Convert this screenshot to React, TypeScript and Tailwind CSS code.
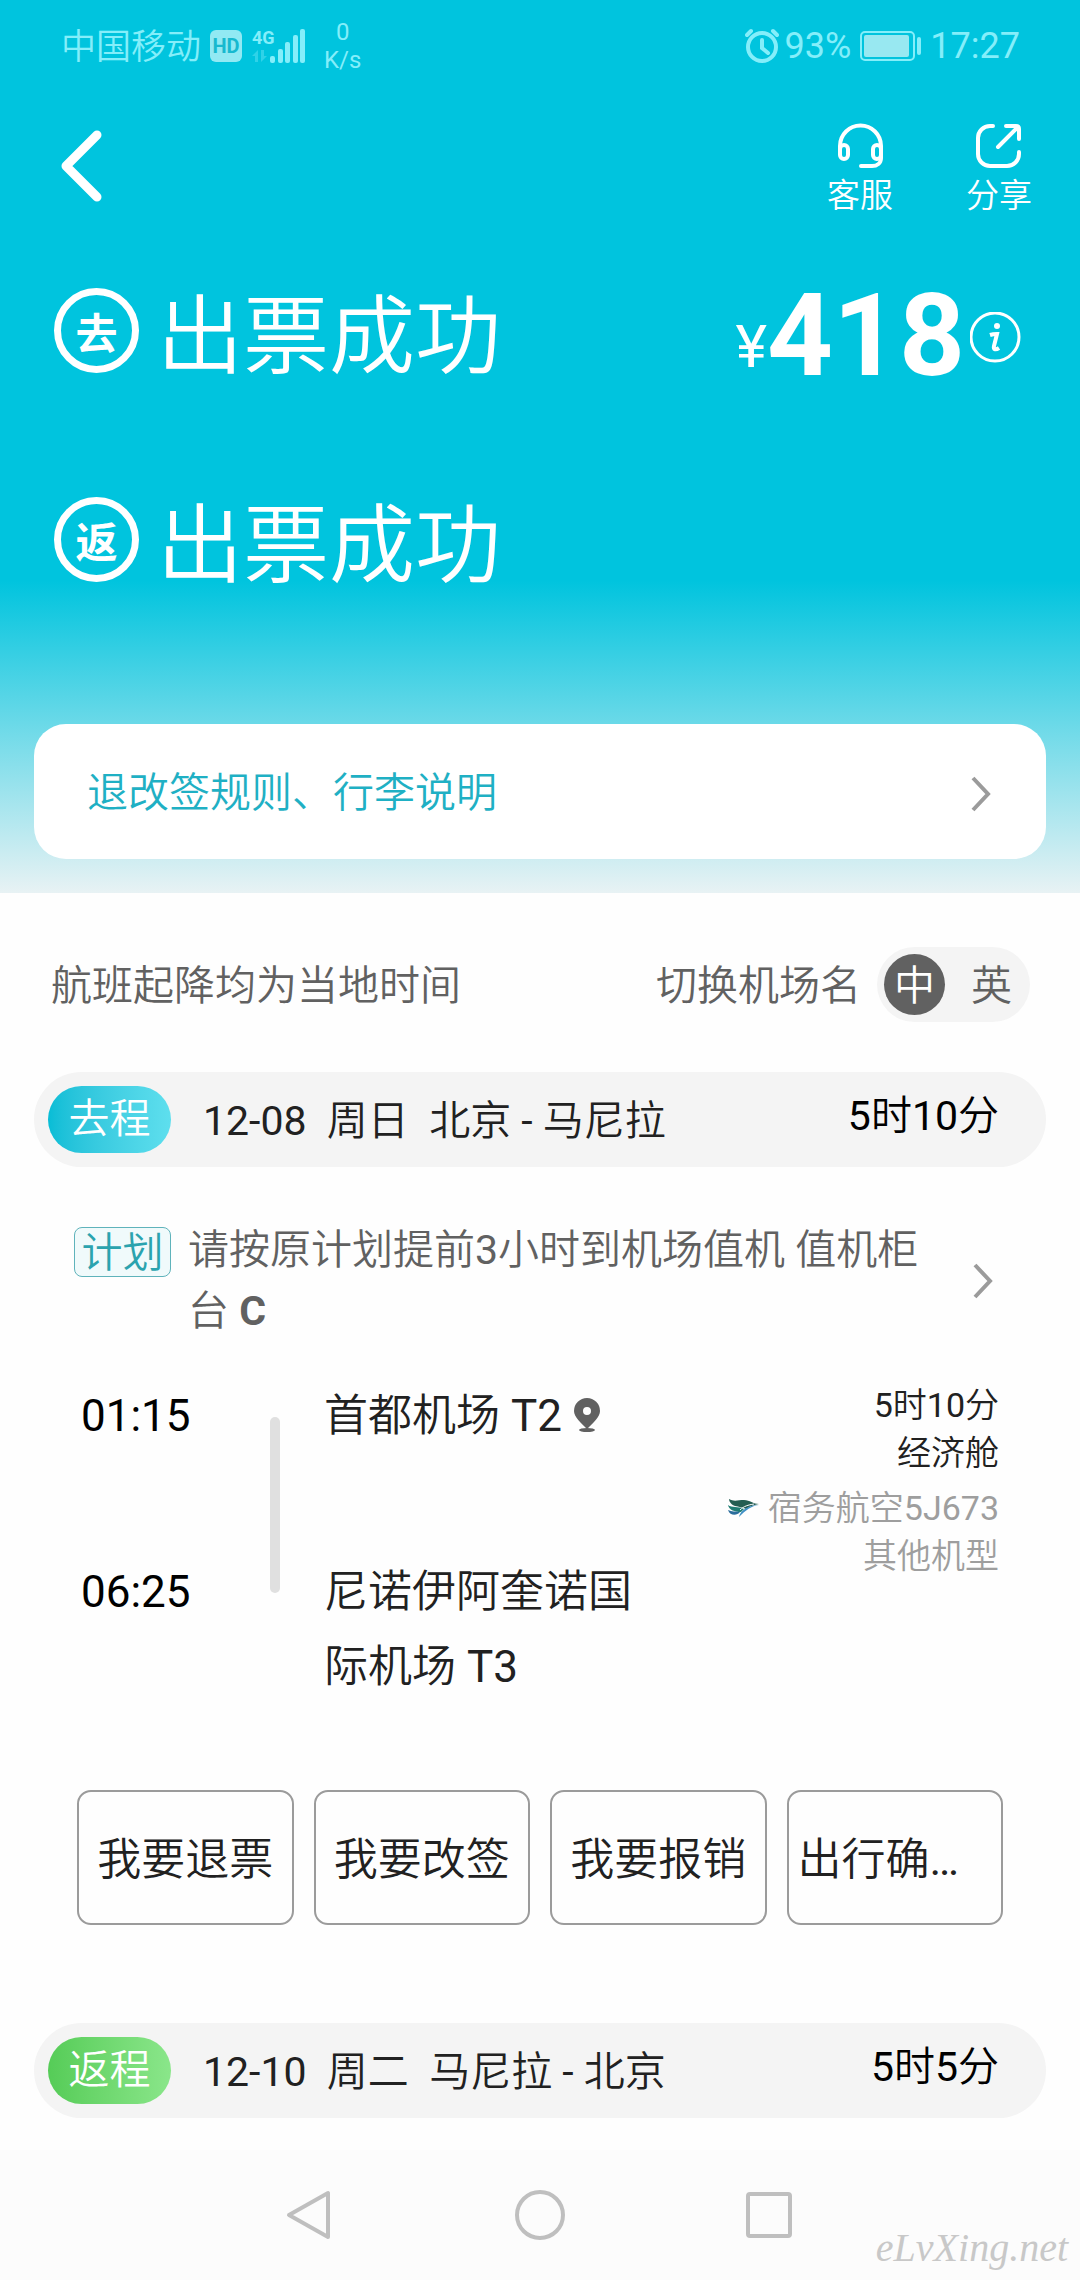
import { useState } from 'react'
import clsx from 'clsx'

interface SegmentBarProps {
  label: string
  date: string
  weekday: string
  from: string
  to: string
  duration: string
  tone: 'outbound' | 'return'
}

const actions = ['我要退票', '我要改签', '我要报销', '出行确…']

function ChevronRight() {
  return (
    <svg className="h-9 w-5 shrink-0" viewBox="0 0 20 36" fill="none" stroke="#9b9b9b" strokeWidth="4">
      <path d="M2 2 17 18 2 34" />
    </svg>
  )
}

function StatusBar() {
  return (
    <div className="flex h-[92px] items-center justify-between pr-[60px] pl-[61px] text-[35px] text-[#84eefa]">
      <div className="flex items-center">
        <span className="pt-1">中国移动</span>
        <span className="ml-[9px] flex h-8 w-8 items-center justify-center rounded-md bg-[#92e9f3] text-[20px] font-bold text-[#18b9cf]">
          HD
        </span>
        <svg className="ml-[10px] h-9 w-[54px]" viewBox="0 0 54 36" fill="currentColor">
          <text x="0" y="16" fontSize="18" fontWeight="700" fontFamily="Roboto, sans-serif">
            4G
          </text>
          <path d="M0 28 6 22v12H3v-6zM9 22v12l6-6h-3v-6z" fill="#2fd2e8" />
          <rect x="18" y="28" width="5" height="7" rx="2" />
          <rect x="26" y="21" width="5" height="14" rx="2" />
          <rect x="33" y="14" width="5" height="21" rx="2" />
          <rect x="41" y="7" width="5" height="28" rx="2" />
          <rect x="48" y="1" width="5" height="34" rx="2" />
        </svg>
        <div className="ml-[18px] flex flex-col items-center text-[24px] leading-7">
          <span>0</span>
          <span>K/s</span>
        </div>
      </div>
      <div className="flex items-center">
        <svg className="h-9 w-[34px]" viewBox="0 0 34 36" fill="none" stroke="currentColor" strokeLinecap="round">
          <circle cx="17" cy="19" r="14" strokeWidth="4" />
          <path d="M17 12v8l6 5" strokeWidth="4" />
          <path d="M2 7 6 3M32 7 28 3" strokeWidth="4" />
        </svg>
        <span className="ml-[6px] text-[36px]">93%</span>
        <svg className="mr-2 ml-[9px] h-[30px] w-[62px]" viewBox="0 0 62 30">
          <rect x="1" y="1" width="53" height="28" rx="4" fill="none" stroke="currentColor" strokeWidth="2" />
          <rect x="4" y="4" width="45" height="22" rx="2" fill="#98e8f1" />
          <rect x="57" y="6" width="4" height="18" rx="2" fill="currentColor" />
        </svg>
        <span className="text-[36px]">17:27</span>
      </div>
    </div>
  )
}

function IssuedStatus({ mark }: { mark: string }) {
  return (
    <div className="flex gap-[18px]">
      <span className="flex h-[85px] w-[85px] items-center justify-center rounded-full border-[7px] border-white font-['Noto_Sans_CJK_SC',sans-serif] text-[42px] leading-none font-bold">
        {mark}
      </span>
      <span className="pt-1 text-[86px] leading-[92px]">出票成功</span>
    </div>
  )
}

function SegmentBar({ label, date, weekday, from, to, duration, tone }: SegmentBarProps) {
  return (
    <div className="mx-[34px] flex h-[95px] items-center rounded-full bg-[#f4f4f4] pr-[47px] pl-[14px] text-[41px]">
      <span
        className={clsx(
          'flex h-[67px] w-[123px] items-center justify-center rounded-full bg-linear-to-r text-white',
          tone === 'outbound' ? 'from-[#06bdd6] to-[#5edfee]' : 'from-[#55cc57] to-[#8ae68a]'
        )}
      >
        {label}
      </span>
      <span className="ml-8 flex-1 whitespace-pre pt-1 text-[#212121]">
        {`${date}  ${weekday}  ${from} - ${to}`}
      </span>
      <span className="pb-[6px] text-black">{duration}</span>
    </div>
  )
}

function CebuLogo() {
  return (
    <svg className="h-5 w-8" viewBox="0 0 32 20">
      <path d="M1 1c5 3 9 1 15 1 6 0 9 4 15 4-5 1-9 2-13 5-4-2-7-2-11-3C4 7 1 4 1 1z" fill="#245e52" />
      <path d="M0 7c4 3 10 1 16 4l-3 3C7 14 1 12 0 7z" fill="#1f7d73" />
      <path d="M0 12c4 2 7 1 12 2-3 4-10 4-12-2z" fill="#2b6d9c" />
      <path d="M12 12c4-4 8-5 14-6" fill="none" stroke="#fefefe" strokeWidth="1" />
      <path d="M31 7c-8 1-13 5-20 12 1-6 9-12 20-12z" fill="#3f8fc4" />
    </svg>
  )
}

export default function App() {
  const [lang, setLang] = useState('中')

  return (
    <div className="relative min-h-screen overflow-hidden bg-[#fefefe] font-['Roboto','Noto_Sans_CJK_SC_DemiLight','Noto_Sans_CJK_SC',sans-serif]">
      <header className="bg-linear-to-b/srgb from-[#00c4de] from-65% to-[#e8f2f4] pb-[34px] text-white">
        <StatusBar />

        <div className="flex items-start justify-between pt-[30px] pr-12 pl-[60px]">
          <button aria-label="返回" className="mt-2">
            <svg className="h-[72px] w-[42px]" viewBox="0 0 42 72" fill="none" stroke="currentColor" strokeWidth="9" strokeLinecap="round" strokeLinejoin="round">
              <path d="M37 5 6 36 37 67" />
            </svg>
          </button>
          <div className="flex gap-[73px] text-[33px] leading-10">
            <button className="flex flex-col items-center gap-2">
              <svg className="h-[46px] w-[46px]" viewBox="0 0 46 46" fill="none" stroke="currentColor" strokeWidth="4" strokeLinecap="round">
                <path d="M3 28v-4a20 20 0 0 1 41 0v12c0 5-4 8-9 8H24" />
                <rect x="3" y="23" width="8" height="14" rx="4" />
                <rect x="36" y="23" width="8" height="14" rx="4" />
              </svg>
              客服
            </button>
            <button className="flex flex-col items-center gap-2">
              <svg className="h-[46px] w-[46px]" viewBox="0 0 46 46" fill="none" stroke="currentColor" strokeWidth="4" strokeLinecap="round" strokeLinejoin="round">
                <path d="M17 4h-3A12 12 0 0 0 2 16v16a12 12 0 0 0 12 12h17a12 12 0 0 0 12-12v-2" />
                <path d="M30 4h10q3 0 3 3v10M42 5 22 25" />
              </svg>
              分享
            </button>
          </div>
        </div>

        <div className="mt-[72px] flex justify-between pr-[59px] pl-[54px]">
          <IssuedStatus mark="去" />
          <div className="flex h-[94px] items-center">
            <span className="mt-6 text-[60px] leading-none">¥</span>
            <span className="text-[115px] leading-none font-bold">418</span>
            <button aria-label="价格明细" className="mt-1 ml-[5px]">
              <svg className="h-[51px] w-[51px]" viewBox="0 0 51 51" fill="none" stroke="currentColor">
                <circle cx="25" cy="25" r="24" strokeWidth="3" />
                <circle cx="27" cy="14" r="3" fill="currentColor" stroke="none" />
                <path d="M20 23c3-1 5-1 7-1l-3 12c-1 4 2 4 5 2" strokeWidth="4" />
              </svg>
            </button>
          </div>
        </div>
        <div className="mt-[113px] pl-[54px]">
          <IssuedStatus mark="返" />
        </div>

        <a
          href="#rules"
          className="mx-[34px] mt-[131px] flex h-[135px] items-center justify-between rounded-[32px] bg-white pt-1 pr-[55px] pl-[53px] text-[41px] text-[#1fb0c4]"
        >
          退改签规则、行李说明
          <ChevronRight />
        </a>
      </header>

      <main className="pb-8">
        <div className="mt-[54px] mb-[50px] flex items-center justify-between pr-[50px] pl-[51px] text-[41px] text-[#616161]">
          <p className="pt-1">航班起降均为当地时间</p>
          <div className="flex items-center gap-4">
            <span className="pt-1">切换机场名</span>
            <div className="flex h-[75px] items-center gap-4 rounded-full bg-[#f4f4f4] pr-2 pl-[7px]">
              {['中', '英'].map((item) => (
                <button
                  key={item}
                  aria-pressed={lang === item}
                  onClick={() => setLang(item)}
                  className={clsx(
                    'flex h-[61px] w-[61px] items-center justify-center rounded-full pt-1',
                    lang === item && 'bg-[#616161] text-white'
                  )}
                >
                  {item}
                </button>
              ))}
            </div>
          </div>
        </div>

        <SegmentBar label="去程" date="12-08" weekday="周日" from="北京" to="马尼拉" duration="5时10分" tone="outbound" />

        <a href="#checkin" className="mt-[53px] flex items-center pr-[87px] pl-[74px] text-[41px] text-[#616161]">
          <span className="mt-[7px] flex h-[50px] w-[97px] shrink-0 items-center justify-center self-start rounded-lg border border-[#5fb3bb] bg-[#f0fafb] pt-1 text-[41px] text-[#2ba3ae]">
            计划
          </span>
          <span className="mr-[30px] ml-[17px] flex-1 leading-[61px]">
            请按原计划提前3小时到机场值机 值机柜台 <b>C</b>
          </span>
          <ChevronRight />
        </a>

        <section className="mt-[37px] flex pr-[81px] pl-[81px] text-[44px] leading-[75px] text-[#212121]">
          <div className="flex w-[189px] flex-col gap-[101px] text-black">
            <time>01:15</time>
            <time>06:25</time>
          </div>
          <div className="mt-[38px] h-44 w-[10px] rounded-full bg-[#e0e0e0]" />
          <div className="ml-11 flex w-[314px] flex-col gap-[101px]">
            <p className="flex items-center gap-3">
              首都机场 T2
              <svg className="mb-1 h-[34px] w-[26px]" viewBox="0 0 26 34" fill="#616161">
                <path fillRule="evenodd" d="M13 0a13 13 0 0 1 13 13c0 6-7 12-13 18C7 25 0 19 0 13A13 13 0 0 1 13 0zm0 9a4 4 0 1 0 0 8 4 4 0 0 0 0-8z" />
                <ellipse cx="13" cy="32" rx="8" ry="2" />
              </svg>
            </p>
            <p>尼诺伊阿奎诺国际机场 T3</p>
          </div>
          <div className="flex flex-1 flex-col items-end pt-[2px] text-[34px] leading-[48px]">
            <span>5时10分</span>
            <span>经济舱</span>
            <span className="mt-[7px] flex items-center gap-2 text-[#9e9e9e]">
              <CebuLogo />
              宿务航空5J673
            </span>
            <span className="text-[#9e9e9e]">其他机型</span>
          </div>
        </section>

        <div className="mt-[85px] mb-[98px] grid grid-cols-4 gap-5 px-[77px]">
          {actions.map((action) => (
            <button
              key={action}
              className="h-[135px] rounded-[14px] border-2 border-[#9b9b9b] px-[9px] pt-1 text-[44px] whitespace-nowrap text-[#212121] last:text-left"
            >
              {action}
            </button>
          ))}
        </div>

        <SegmentBar label="返程" date="12-10" weekday="周二" from="马尼拉" to="北京" duration="5时5分" tone="return" />
      </main>

      <nav className="flex h-[130px] items-center justify-center gap-[180px] bg-[#fcfcfc]">
        <button aria-label="后退">
          <svg className="h-[50px] w-[50px]" viewBox="0 0 50 50" fill="none" stroke="#bfbfbf" strokeWidth="4" strokeLinejoin="round">
            <path d="M43 3v44L4 25z" />
          </svg>
        </button>
        <button aria-label="主屏幕">
          <svg className="h-[50px] w-[50px]" viewBox="0 0 50 50" fill="none" stroke="#bfbfbf" strokeWidth="4">
            <circle cx="25" cy="25" r="23" />
          </svg>
        </button>
        <button aria-label="最近任务">
          <svg className="h-[50px] w-[50px]" viewBox="0 0 50 50" fill="none" stroke="#bfbfbf" strokeWidth="4">
            <rect x="3" y="4" width="42" height="42" rx="2" />
          </svg>
        </button>
      </nav>

      <span className="absolute right-3 bottom-3 font-['Liberation_Serif',serif] text-[40px] leading-none text-[#c8c8c8] italic">
        eLvXing.net
      </span>
    </div>
  )
}
